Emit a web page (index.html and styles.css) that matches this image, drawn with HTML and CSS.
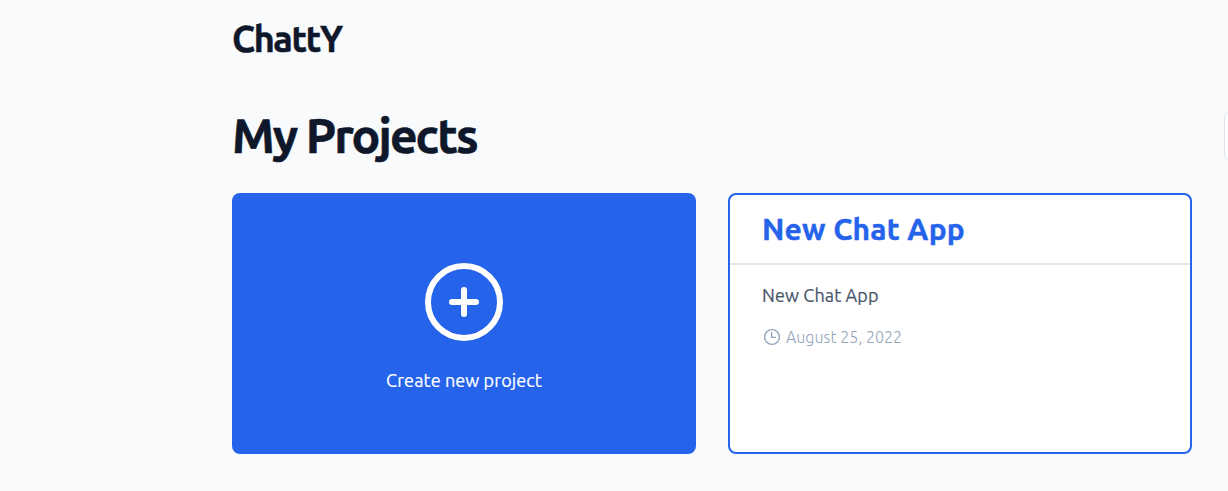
FILE: index.html
```html
<!DOCTYPE html>
<html lang="en">
<head>
<meta charset="utf-8">
<title>ChattY</title>
<link rel="stylesheet" href="styles.css">
</head>
<body>
<div class="page">
  <header class="header"><span class="t brand">ChattY</span></header>
  <div class="heading">
    <h1 class="t title">My Projects</h1>
    <button class="action" aria-label="Options"></button>
  </div>
  <main class="grid">
    <a class="card create">
      <svg class="plus" viewBox="0 0 78 78" fill="none" stroke="currentColor" stroke-width="6" stroke-linecap="round"><circle cx="39" cy="39" r="36"/><path d="M39 27v24M27 39h24"/></svg>
      <span class="t create-label">Create new project</span>
    </a>
    <article class="card project">
      <div class="project-head"><h2 class="t project-name">New Chat App</h2></div>
      <div class="project-body">
        <p class="t description">New Chat App</p>
        <div class="date">
          <svg class="clock" viewBox="0 0 18 18" fill="none" stroke="currentColor" stroke-width="1.4"><circle cx="9" cy="9" r="7.4"/><path d="M8.6 4v5.4H13"/></svg>
          <span class="t date-text">August 25, 2022</span>
        </div>
      </div>
    </article>
  </main>
</div>
</body>
</html>
```

FILE: styles.css
```css
* { box-sizing: border-box; margin: 0; }
body { background: #f8fafc; color: #0f172a; font-family: Ubuntu, "Noto Sans", sans-serif; overflow: hidden; }
.page { margin-left: 232px; width: 1040px; }
.t { white-space: nowrap; }
.header { height: 78px; display: flex; align-items: center; }
.brand { font-size: 36px; line-height: 40px; font-weight: 700; letter-spacing: -1.35px; -webkit-text-stroke: 0.5px currentColor; }
.heading { height: 115px; padding-bottom: 1px; display: flex; align-items: center; justify-content: space-between; }
.title { font-size: 48px; line-height: 48px; font-weight: 700; letter-spacing: -1.95px; -webkit-text-stroke: 0.6px currentColor; }
.action { width: 48px; height: 50px; margin-top: 1px; border: 1px solid #dbe4ef; border-radius: 8px; background: #fff; }
.grid { display: grid; grid-template-columns: 464px 464px; gap: 32px; }
.card { height: 261px; border-radius: 8px; }
.create { background: #2563eb; color: #fff; display: flex; flex-direction: column; align-items: center; padding-top: 70px; }
.plus { width: 78px; height: 78px; }
.create-label { margin-top: 25px; font-size: 18px; line-height: 28px; letter-spacing: 0.1px; -webkit-text-stroke: 0.2px currentColor; }
.project { background: #fff; border: 2px solid #2563eb; }
.project-head { height: 70px; padding: 16px 32px; border-bottom: 2px solid #e2e8f0; }
.project-name { color: #2563eb; font-size: 30px; line-height: 36px; font-weight: 700; letter-spacing: 0.23px; -webkit-text-stroke: 0.4px currentColor; }
.project-body { padding: 16px 32px; color: #475569; }
.description { font-size: 18px; line-height: 28px; letter-spacing: 0.1px; -webkit-text-stroke: 0.2px currentColor; }
.date { display: flex; align-items: center; gap: 5px; margin-top: 16px; padding-left: 1px; color: #94a3b8; }
.clock { width: 18px; height: 18px; }
.date-text { font-size: 16px; line-height: 24px; font-weight: 300; letter-spacing: 0.04px; }
```
